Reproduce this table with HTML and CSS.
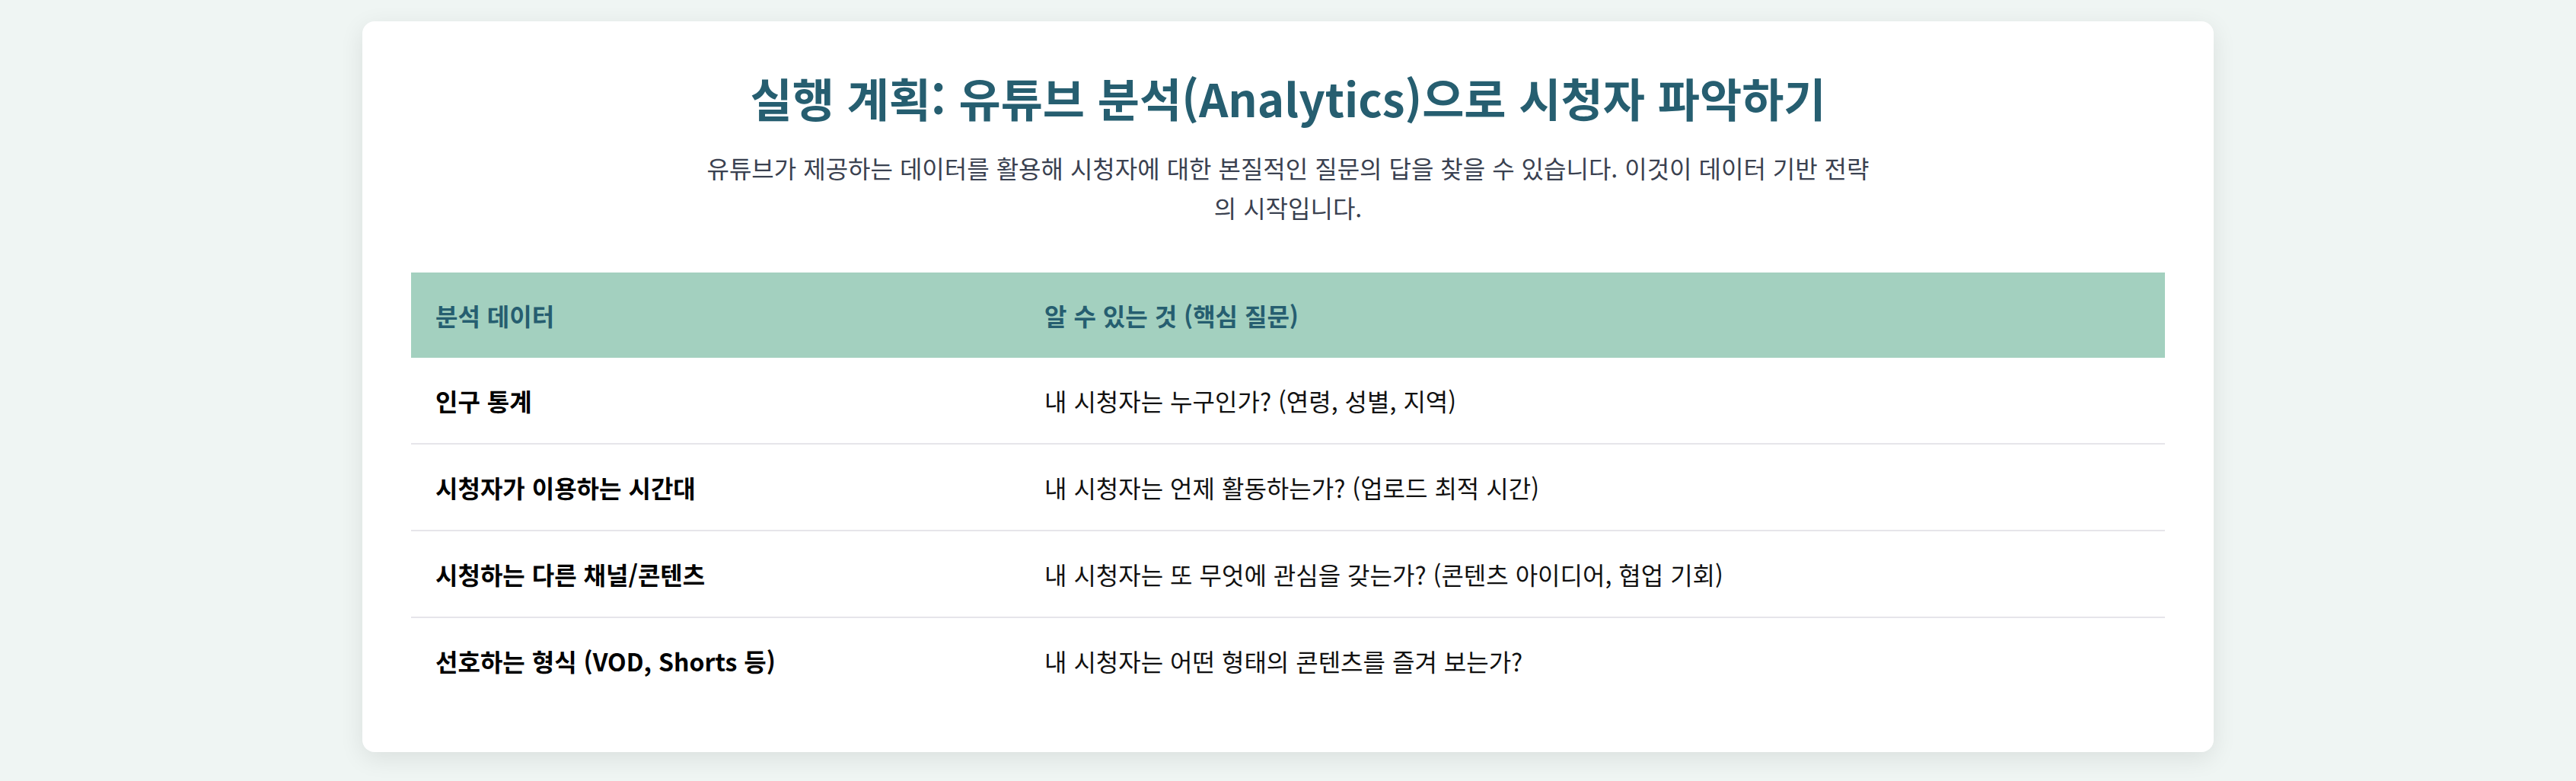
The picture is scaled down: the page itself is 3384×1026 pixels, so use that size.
FILE: index.html
```html
<!DOCTYPE html>
<html lang="ko">
<head>
<meta charset="utf-8">
<title>실행 계획</title>
<link rel="stylesheet" href="styles.css">
</head>
<body>
<main class="card">
  <h1 class="title">실행 계획: 유튜브 분석(Analytics)으로 시청자 파악하기</h1>
  <p class="lead">유튜브가 제공하는 데이터를 활용해 시청자에 대한 본질적인 질문의 답을 찾을 수 있습니다. 이것이 데이터 기반 전략의 시작입니다.</p>
  <table class="plan">
    <thead>
      <tr><th class="col-a">분석 데이터</th><th>알 수 있는 것 (핵심 질문)</th></tr>
    </thead>
    <tbody>
      <tr><td class="key">인구 통계</td><td>내 시청자는 누구인가? (연령, 성별, 지역)</td></tr>
      <tr><td class="key">시청자가 이용하는 시간대</td><td>내 시청자는 언제 활동하는가? (업로드 최적 시간)</td></tr>
      <tr><td class="key">시청하는 다른 채널/콘텐츠</td><td>내 시청자는 또 무엇에 관심을 갖는가? (콘텐츠 아이디어, 협업 기회)</td></tr>
      <tr><td class="key">선호하는 형식 (VOD, Shorts 등)</td><td>내 시청자는 어떤 형태의 콘텐츠를 즐겨 보는가?</td></tr>
    </tbody>
  </table>
</main>
</body>
</html>
```

FILE: styles.css
```css
html, body {
  margin: 0;
  padding: 0;
}
body {
  background: #eff5f3;
  font-family: "Noto Sans CJK KR", "Noto Sans", sans-serif;
  padding-top: 28px;
  padding-bottom: 40px;
}
.card {
  box-sizing: border-box;
  width: 2432px;
  margin: 0 auto;
  background: #ffffff;
  border-radius: 16px;
  padding: 64px;
  box-shadow: 0 8px 32px rgba(0, 0, 0, 0.09);
}
.title {
  margin: 0 0 30px;
  text-align: center;
  font-size: 60px;
  line-height: 72px;
  font-weight: 700;
  color: #265e70;
}
.lead {
  margin: 0 auto 60px;
  max-width: 1536px;
  text-align: center;
  font-size: 32px;
  line-height: 52px;
  color: #3a4150;
}
.plan {
  width: 100%;
  border-collapse: collapse;
}
.plan th {
  background: #a3d0bf;
  color: #265e70;
  font-weight: 700;
  text-align: left;
  font-size: 32px;
  line-height: 48px;
  padding: 32px;
}
.plan th.col-a {
  width: 736px;
}
.plan td {
  font-size: 32px;
  line-height: 48px;
  padding: 32px;
  color: #111111;
  border-bottom: 2px solid #e6e5ea;
}
.plan tbody tr:last-child td {
  border-bottom: none;
}
.plan td.key {
  font-weight: 700;
  color: #000000;
}
```
